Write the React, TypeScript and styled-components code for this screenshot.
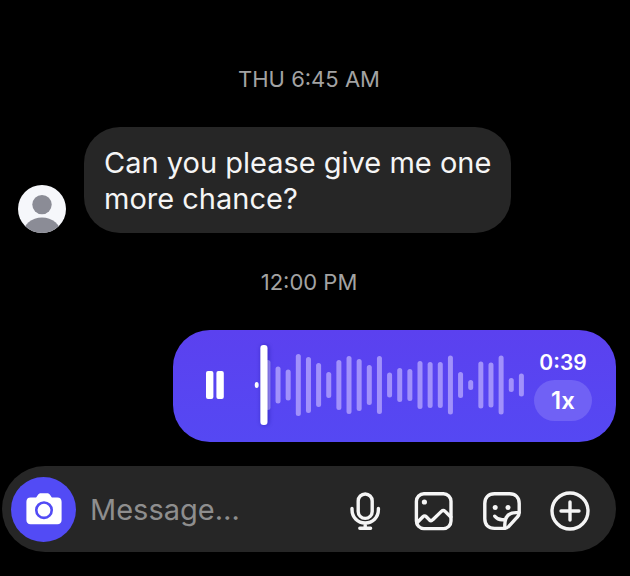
import React from "react";
import styled, { createGlobalStyle } from "styled-components";

const GlobalStyle = createGlobalStyle`
  *, *::before, *::after {
    box-sizing: border-box;
  }

  body {
    margin: 0;
    background: #000;
    color: #f5f5f5;
    font-family: Inter, "Liberation Sans", sans-serif;
  }

  button, input {
    font: inherit;
    color: inherit;
  }
`;

const Screen = styled.main`
  display: flex;
  flex-direction: column;
  min-height: 100vh;
  padding: 63px 14px 24px 2px;
`;

const Thread = styled.section`
  display: flex;
  flex-direction: column;
  flex: 1;
`;

const Timestamp = styled.time`
  align-self: center;
  color: #a3a3a3;
  font-size: 22px;
  line-height: 32px;
`;

const IncomingRow = styled.div`
  display: flex;
  align-items: flex-end;
  gap: 18px;
  margin: 32px 0 33px;
  padding-left: 16px;
`;

const Avatar = styled.svg`
  flex: none;
  width: 48px;
  height: 48px;
  border-radius: 50%;
`;

const Bubble = styled.p`
  max-width: 427px;
  margin: 0;
  padding: 18px 14px 16px 20px;
  border-radius: 36px;
  background: #262626;
  font-size: 29px;
  line-height: 36px;
`;

const VoiceBubble = styled.article`
  display: flex;
  align-items: center;
  align-self: flex-end;
  height: 112px;
  margin: 32px 0 24px;
  padding: 0 24px 2px 28px;
  border-radius: 37px;
  background: linear-gradient(#5b41ef, #5548f3);
`;

const PlainButton = styled.button`
  display: flex;
  align-items: center;
  justify-content: center;
  flex: none;
  padding: 0;
  border: 0;
  background: none;
  cursor: pointer;
`;

const PauseButton = styled(PlainButton)`
  width: 28px;
  height: 40px;
  margin-right: 24px;
`;

const Waveform = styled.svg`
  display: block;
  width: 272px;
  height: 92px;
  margin-right: 9px;
`;

const VoiceMeta = styled.div`
  display: flex;
  flex-direction: column;
  align-items: center;
  gap: 4px;
  width: 58px;
  color: #fff;
  font-weight: 600;
`;

const Duration = styled.span`
  font-size: 21px;
  line-height: 26px;
`;

const SpeedButton = styled(PlainButton)`
  width: 58px;
  height: 41px;
  border-radius: 21px;
  background: #7061f5;
  font-size: 24px;
`;

const Composer = styled.form`
  display: flex;
  align-items: center;
  height: 86px;
  padding: 0 26px 0 9px;
  border-radius: 43px;
  background: #262626;
`;

const CameraButton = styled(PlainButton)`
  width: 65px;
  height: 65px;
  border-radius: 50%;
  background: #524bf5;
`;

const MessageInput = styled.input`
  flex: 1;
  min-width: 0;
  height: 44px;
  margin: 0 14px;
  padding: 0;
  border: 0;
  outline: 0;
  background: none;
  font-size: 29px;

  &::placeholder {
    color: #8e8e8e;
    opacity: 1;
  }
`;

const Tools = styled.div`
  display: flex;
  gap: 28px;
  padding-top: 3px;
`;

const ToolIcon = styled.svg`
  display: block;
  width: 40px;
  height: 40px;
  fill: none;
  stroke: #f5f5f5;
  stroke-width: 3.4;
  stroke-linecap: round;
  stroke-linejoin: round;
`;

const LEVELS = [
  50, 37, 31, 62, 56, 44, 26, 50, 58, 52, 40, 58, 25, 34, 32, 48, 46, 46, 59,
  26, 10, 47, 45, 59, 14, 23,
];
const BAR_PITCH = 10.14;

function VoiceWave() {
  return (
    <Waveform viewBox="0 0 272 92" role="img" aria-label="Voice message waveform">
      <defs>
        <filter id="playhead-shadow" x="-200%" y="-10%" width="500%" height="120%">
          <feDropShadow dx="1" dy="0" stdDeviation="2.5" floodColor="#1a1080" floodOpacity="0.45" />
        </filter>
      </defs>
      {LEVELS.map((level, i) => (
        <rect
          key={i}
          x={12.4 + i * BAR_PITCH}
          y={46 - level / 2}
          width="5"
          height={level}
          rx="2.5"
          fill="#a191fb"
        />
      ))}
      <ellipse cx="3.7" cy="46" rx="2" ry="3" fill="#fff" />
      <rect x="7.4" y="6" width="7" height="80" rx="3.2" fill="#fff" filter="url(#playhead-shadow)" />
    </Waveform>
  );
}

const tools = [
  {
    label: "Record voice message",
    drawing: (
      <>
        <rect x="12.2" y="3" width="14" height="24.4" rx="7" />
        <path d="M6 17.4v1.2C6 26.5 11.800 32 19.200 32S32.400 26.500 32.400 18.600v-1.200M19.200 32v5M13.800 37.200h10.800" />
      </>
    ),
  },
  {
    label: "Choose photo",
    drawing: (
      <>
        <rect x="2.4" y="2.8" width="34.6" height="34.8" rx="7.5" />
        <path d="M3 31.8L8.9 25.7Q10.6 24 12.3 25.7L15.4 28.9Q17.1 30.500 18.800 28.700L27.400 20.400Q29.300 18.600 31.100 20.400L36.800 26" />
        <circle cx="10.4" cy="11" r="2.6" fill="#f5f5f5" stroke="none" />
      </>
    ),
  },
  {
    label: "Stickers",
    drawing: (
      <>
        <path d="M22.8 37.4H12.5C6.4 37.4 2.8 33.8 2.8 27.7V12.5C2.8 6.4 6.4 2.8 12.5 2.8h15c6.1 0 9.7 3.6 9.7 9.7V21.6c0 2-.6 3.2-2 4.6L26.8 35.4c-1.4 1.4-2.4 2-4 2Z" />
        <path d="M22.8 37.2v-3.4C22.8 25.5 27 21.6 34 21.6h3M12.8 25.2c2 2.6 5 3.9 8.8 3.5" />
        <circle cx="13.2" cy="16.6" r="2.5" fill="#f5f5f5" stroke="none" />
        <circle cx="26" cy="16.6" r="2.5" fill="#f5f5f5" stroke="none" />
      </>
    ),
  },
  {
    label: "More",
    drawing: (
      <>
        <circle cx="20" cy="20" r="18" />
        <path d="M20 11v18M11 20h18" />
      </>
    ),
  },
];

export default function App() {
  return (
    <>
      <GlobalStyle />
      <Screen>
        <Thread>
          <Timestamp>THU 6:45 AM</Timestamp>
          <IncomingRow>
            <Avatar viewBox="0 0 48 48" role="img" aria-label="Profile picture">
              <rect width="48" height="48" fill="#f6f7fb" />
              <circle cx="24" cy="19.6" r="9.7" fill="#8b8c96" />
              <ellipse cx="24" cy="49" rx="19" ry="16.6" fill="#8b8c96" />
            </Avatar>
            <Bubble>Can you please give me one more chance?</Bubble>
          </IncomingRow>
          <Timestamp>12:00 PM</Timestamp>
          <VoiceBubble>
            <PauseButton type="button" aria-label="Pause">
              <svg width="18" height="28" viewBox="0 0 18 28" fill="#fff">
                <rect width="7.4" height="28" rx="2" />
                <rect x="10.4" width="7.4" height="28" rx="2" />
              </svg>
            </PauseButton>
            <VoiceWave />
            <VoiceMeta>
              <Duration>0:39</Duration>
              <SpeedButton type="button" aria-label="Playback speed 1x">1x</SpeedButton>
            </VoiceMeta>
          </VoiceBubble>
        </Thread>
        <Composer onSubmit={(event) => event.preventDefault()}>
          <CameraButton type="button" aria-label="Open camera">
            <svg width="36" height="32" viewBox="0 0 36 32">
              <path
                fill="#fff"
                d="M4.6 4.6h4.2c1 0 1.6-.4 2.1-1.2l.6-1C12.4.8 13.5.2 15.2.2h5.6c1.7 0 2.8.6 3.7 2.2l.6 1c.5.8 1.1 1.2 2.1 1.2h4.2c2.7 0 4.2 1.5 4.2 4.2v18.2c0 2.7-1.5 4.2-4.2 4.2H4.6C1.900 31.200.4 29.700.4 27V8.800C.4 6.100 1.900 4.600 4.600 4.600Z"
              />
              <circle cx="18" cy="17.2" r="7.7" fill="none" stroke="#524bf5" strokeWidth="2.6" />
            </svg>
          </CameraButton>
          <MessageInput type="text" placeholder="Message…" aria-label="Message" />
          <Tools>
            {tools.map(({ label, drawing }) => (
              <PlainButton key={label} type="button" aria-label={label}>
                <ToolIcon viewBox="0 0 40 40" aria-hidden="true">
                  {drawing}
                </ToolIcon>
              </PlainButton>
            ))}
          </Tools>
        </Composer>
      </Screen>
    </>
  );
}
